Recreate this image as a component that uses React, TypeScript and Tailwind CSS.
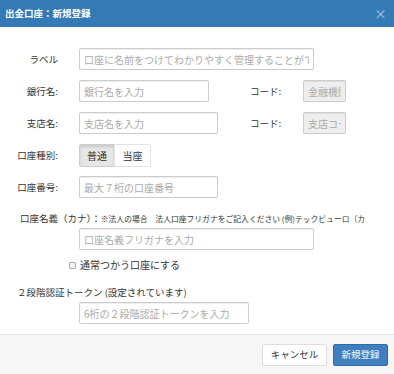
import React from "react";

const font = { fontFamily: '"Noto Sans CJK JP", "Noto Sans", sans-serif' };

const inputCls =
  "block h-[22px] rounded-[2px] border border-[#ccc] px-[4px] text-[10px] text-[#555] shadow-[inset_0_1px_1px_rgba(0,0,0,0.075)] outline-none placeholder:text-[#aaa]";

function Label({ children }: { children: React.ReactNode }) {
  return (
    <div className="w-[58px] shrink-0 text-right text-[9.5px] text-[#333]">
      {children}
    </div>
  );
}

function CodeField({ placeholder }: { placeholder: string }) {
  return (
    <div className="flex items-center">
      <span className="w-[53px] text-[9.5px] text-[#333]">コード:</span>
      <input
        className={`${inputCls} w-[43px] bg-[#eee] placeholder:text-[#999]`}
        placeholder={placeholder}
        disabled
      />
    </div>
  );
}

export default function App() {
  return (
    <div style={font} className="h-[374px] w-[394px] overflow-hidden bg-white">
      {/* Header */}
      <div className="flex h-[27px] items-center justify-between bg-[#337ab7] pl-[5px] pr-[7px]">
        <h1 className="text-[9.5px] font-bold text-white">出金口座：新規登録</h1>
        <span className="text-[13px] font-bold leading-none text-[#8fb0d4]">×</span>
      </div>

      {/* Body */}
      <div className="h-[307px] pt-[21px]">
        <div className="flex items-center gap-[21px]">
          <Label>ラベル</Label>
          <input
            className={`${inputCls} w-[235px] bg-white`}
            placeholder="口座に名前をつけてわかりやすく管理することができます"
          />
        </div>

        <div className="mt-[10px] flex items-center gap-[21px]">
          <Label>銀行名:</Label>
          <div className="w-[150px]">
            <input className={`${inputCls} w-[130px] bg-white`} placeholder="銀行名を入力" />
          </div>
          <CodeField placeholder="金融機関コード" />
        </div>

        <div className="mt-[10px] flex items-center gap-[21px]">
          <Label>支店名:</Label>
          <div className="w-[150px]">
            <input className={`${inputCls} w-[139px] bg-white`} placeholder="支店名を入力" />
          </div>
          <CodeField placeholder="支店コード" />
        </div>

        <div className="mt-[10px] flex items-center gap-[21px]">
          <Label>口座種別:</Label>
          <div className="flex h-[23px] text-[10px] text-[#333]">
            <button className="w-[36px] rounded-l-[2px] border border-[#ccc] bg-[#e6e6e6] shadow-[inset_0_2px_3px_rgba(0,0,0,0.125)]">
              普通
            </button>
            <button className="-ml-px w-[37px] rounded-r-[2px] border border-[#e3e3e3] bg-white">
              当座
            </button>
          </div>
        </div>

        <div className="mt-[9px] flex items-center gap-[21px]">
          <Label>口座番号:</Label>
          <input className={`${inputCls} w-[139px] bg-white`} placeholder="最大７桁の口座番号" />
        </div>

        <div className="mt-[13px] mr-[16px] overflow-hidden whitespace-nowrap pl-[20px] text-[9.5px] leading-[14px] text-[#333]">
          <span>口座名義（カナ）：</span>
          <span className="text-[7.8px]">
            ※法人の場合　法人口座フリガナをご記入ください (例)テックビューロ（カ
          </span>
        </div>

        <div className="mt-[2px] pl-[79px]">
          <input className={`${inputCls} w-[235px] bg-white`} placeholder="口座名義フリガナを入力" />
        </div>

        <label className="mt-[8px] flex items-center gap-[4px] pl-[69px] text-[10px] leading-[14px] text-[#333]">
          <span className="h-[7px] w-[7px] rounded-[1px] border border-[#aaa] bg-[#f3f3f3]" />
          <span>通常つかう口座にする</span>
        </label>

        <div className="mt-[13px] pl-[17px] text-[9.5px] leading-[14px] text-[#333]">
          ２段階認証トークン (設定されています)
        </div>

        <div className="mt-[3px] pl-[79px]">
          <input className={`${inputCls} w-[170px] bg-white`} placeholder="6桁の２段階認証トークンを入力" />
        </div>
      </div>

      {/* Footer */}
      <div className="flex h-[40px] items-center justify-end gap-[6px] border-t border-[#e5e5e5] bg-[#f6f6f6] pr-[6px]">
        <button className="h-[22px] w-[65px] rounded-[2px] border border-[#ddd] bg-white text-[9.5px] text-[#333]">
          キャンセル
        </button>
        <button className="h-[22px] w-[55px] rounded-[2px] border border-[#2e6da4] bg-[#3d7fc1] text-[9.5px] text-white">
          新規登録
        </button>
      </div>
    </div>
  );
}
